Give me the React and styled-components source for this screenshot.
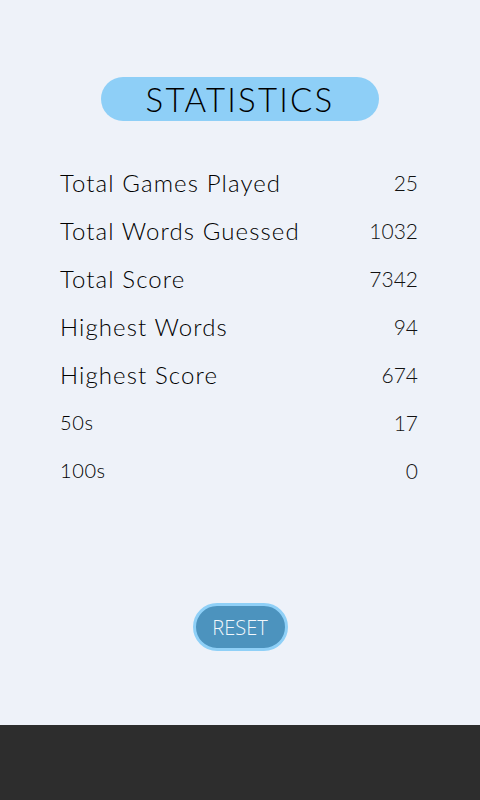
import styled, { createGlobalStyle } from 'styled-components';

const Global = createGlobalStyle`
  html, body {
    margin: 0;
    padding: 0;
    background: #eef2f9;
  }
`;

const Screen = styled.div`
  width: 480px;
  height: 800px;
  display: flex;
  flex-direction: column;
  font-family: Lato, 'Open Sans', sans-serif;
  color: #000;
`;

const Main = styled.main`
  flex: 1;
  display: flex;
  flex-direction: column;
  align-items: center;
  padding-top: 77px;
  background: #eef2f9;
`;

const Title = styled.h1`
  margin: 0;
  width: 278px;
  height: 44px;
  border-radius: 22px;
  background: #8ecff7;
  display: flex;
  align-items: center;
  justify-content: center;
  font-weight: 300;
  font-size: 33px;
  letter-spacing: 2.2px;
  color: #000;
`;

const List = styled.ul`
  list-style: none;
  margin: 37px 0 0;
  padding: 0 62px 0 60px;
  align-self: stretch;
`;

const Row = styled.li`
  height: 48px;
  display: flex;
  align-items: center;
  justify-content: space-between;
  font-weight: 300;
  font-size: ${(p) => (p.small ? '20px' : '24px')};
  letter-spacing: ${(p) => (p.small ? '0.6px' : '1.1px')};
`;

const Value = styled.span`
  font-size: 21px;
  letter-spacing: 0;
  color: #111;
`;

const Reset = styled.button`
  margin-top: 109px;
  width: 95px;
  height: 48px;
  border-radius: 24px;
  border: 3px solid #8fd0f7;
  background: #4c93be;
  color: #f2f7fc;
  font-family: 'Open Sans', sans-serif;
  font-weight: 300;
  font-size: 20px;
  cursor: pointer;
`;

const Footer = styled.footer`
  height: 75px;
  background: #2d2d2d;
`;

const stats = [
  ['Total Games Played', 25],
  ['Total Words Guessed', 1032],
  ['Total Score', 7342],
  ['Highest Words', 94],
  ['Highest Score', 674],
  ['50s', 17, true],
  ['100s', 0, true],
];

export default function App() {
  return (
    <Screen>
      <Global />
      <Main>
        <Title>STATISTICS</Title>
        <List>
          {stats.map(([label, value, small]) => (
            <Row key={label} small={small}>
              <span>{label}</span>
              <Value>{value}</Value>
            </Row>
          ))}
        </List>
        <Reset>RESET</Reset>
      </Main>
      <Footer />
    </Screen>
  );
}
